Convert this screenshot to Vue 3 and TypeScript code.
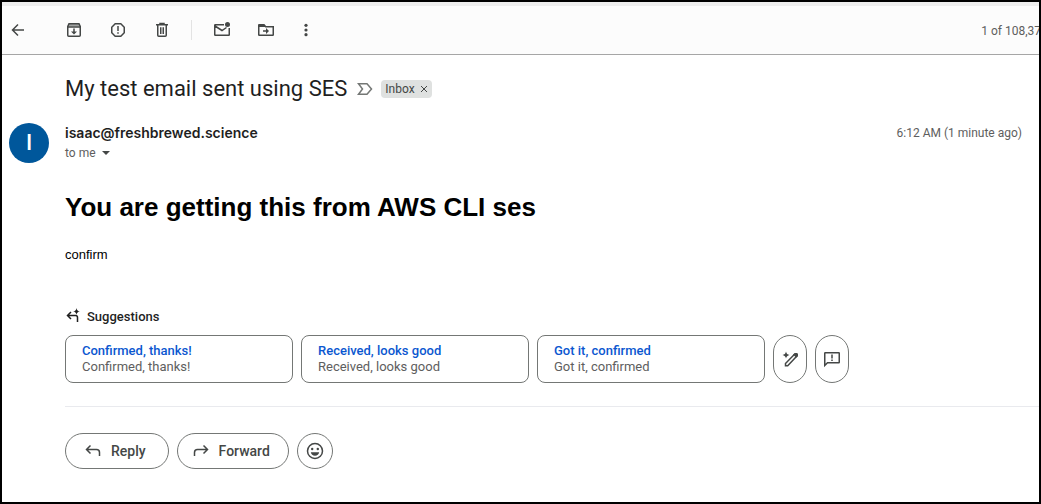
<script setup lang="ts">
interface Suggestion {
  title: string
  body: string
}

const suggestions: Suggestion[] = [
  { title: 'Confirmed, thanks!', body: 'Confirmed, thanks!' },
  { title: 'Received, looks good', body: 'Received, looks good' },
  { title: 'Got it, confirmed', body: 'Got it, confirmed' },
]
</script>

<template>
  <div class="window">
    <header class="toolbar">
      <button class="tool back" aria-label="Back to inbox">
        <svg viewBox="0 0 20 20"><path d="M16 10H5M10 4.5 4.5 10l5.500 5.500" class="line" /></svg>
      </button>
      <button class="tool" aria-label="Archive">
        <svg viewBox="0 0 20 20">
          <path d="M3.750 6.500v8.750a1 1 0 0 0 1 1h10.500a1 1 0 0 0 1-1V6.500L15 3.750H5L3.750 6.500Z" class="line" />
          <path d="M4 7h12" class="line" />
          <path d="M5 4h10l1 2.500H4z" opacity=".5" />
          <path d="M9.250 8.500h1.500v3h2.250l-3 3-3-3h2.250z" />
        </svg>
      </button>
      <button class="tool" aria-label="Report spam">
        <svg viewBox="0 0 20 20">
          <path d="M7.200 3.750h5.600l3.450 3.450v5.600l-3.450 3.450H7.200L3.750 12.800V7.200z" class="line" />
          <path d="M9.250 6h1.500v5h-1.500zM9.250 12.200h1.500v1.600h-1.500z" />
        </svg>
      </button>
      <button class="tool" aria-label="Delete">
        <svg viewBox="0 0 20 20">
          <path d="M4 4.750h12M8 4V3.500h4V4M5.750 5v10.250a1 1 0 0 0 1 1h6.500a1 1 0 0 0 1-1V5M8.750 7.200v6.800M11.250 7.200v6.800" class="line" />
        </svg>
      </button>
      <span class="divider"></span>
      <button class="tool" aria-label="Mark as unread">
        <svg viewBox="0 0 20 20">
          <path d="M12 4.750H3.250a.5.5 0 0 0-.5.5v9.500a.5.5 0 0 0 .5.5h13.500a.5.5 0 0 0 .5-.5V8M3 6l7 4.500L14.500 7.500" class="line" />
          <circle cx="15.500" cy="4.500" r="2.500" />
        </svg>
      </button>
      <button class="tool" aria-label="Move to">
        <svg viewBox="0 0 20 20">
          <path d="M2.750 6.500v8.250a.5.5 0 0 0 .5.500h13.500a.5.5 0 0 0 .5-.500V6.750H9.700L8 4.750H3.250a.5.5 0 0 0-.5.500z" class="line" />
          <path d="M2.500 4.500h5.500l2 2.500H2.500z" />
          <path d="M7 10.250h3V8l3 3-3 3v-2.250H7z" />
        </svg>
      </button>
      <button class="tool more" aria-label="More">
        <svg viewBox="0 0 20 20">
          <circle cx="10" cy="5.300" r="1.600" /><circle cx="10" cy="10" r="1.600" /><circle cx="10" cy="14.700" r="1.600" />
        </svg>
      </button>
      <span class="counter">1 of 108,37</span>
    </header>

    <main class="mail">
      <div class="subject-row">
        <h1>My test email sent using SES</h1>
        <svg class="marker" viewBox="0 0 16 14"><path d="M1.500 1.750h8.500l4.500 5.250-4.500 5.250H1.500L5.500 7z" /></svg>
        <span class="label">Inbox<button aria-label="Remove label Inbox"><svg viewBox="0 0 8 8"><path d="m1 1 6 6M7 1 1 7" /></svg></button></span>
      </div>

      <div class="sender-row">
        <span class="avatar">I</span>
        <div class="sender">
          <div class="address">isaac@freshbrewed.science</div>
          <button class="recipient">to me<svg viewBox="0 0 8 4"><path d="M0 0h8L4 4z" /></svg></button>
        </div>
        <time>6:12 AM (1 minute ago)</time>
      </div>

      <article class="message">
        <h2>You are getting this from AWS CLI ses</h2>
        <p>confirm</p>
      </article>

      <section class="replies">
        <h3>
          <svg viewBox="0 0 16 16">
            <path d="M6 4 2.500 7.500 6 11M2.500 7.500h8a2 2 0 0 1 2 2V14" class="line" />
            <path d="M11.500 0q.4 3.100 3.500 3.500-3.100.4-3.500 3.500-.4-3.100-3.500-3.500 3.100-.4 3.500-3.500z" />
          </svg>Suggestions
        </h3>
        <div class="cards">
          <button v-for="s in suggestions" :key="s.title" class="card">
            <span class="card-title">{{ s.title }}</span>
            <span class="card-body">{{ s.body }}</span>
          </button>
          <button class="pill" aria-label="Help me write">
            <svg viewBox="0 0 20 20">
              <path d="M5.500 16.800v-2.300L14.800 5a1.200 1.200 0 0 1 1.700 0l.4.4a1.200 1.200 0 0 1 0 1.700L7.700 16.800z" class="line" />
              <path d="m13 5.500 2-1.500h2l1 1v2l-1.800 1.800z" />
              <path d="M6 2.500q.5 3 3.500 3.500-3 .5-3.500 3.500Q5.500 6.500 2.500 6q3-.5 3.500-3.500z" />
            </svg>
          </button>
          <button class="pill" aria-label="Send feedback">
            <svg viewBox="0 0 20 20">
              <path d="M2.750 16.500V4.250a.5.5 0 0 1 .5-.5h13.500a.5.5 0 0 1 .5.500v9a.5.5 0 0 1-.5.500H5.500z" class="line" />
              <path d="M9.250 5.500h1.500v4h-1.500zM9.250 10.500h1.500V12h-1.500z" />
            </svg>
          </button>
        </div>
      </section>

      <footer class="actions">
        <button class="action">
          <svg viewBox="0 0 20 20"><path d="M7.500 4.500 3.500 8.500l4 4M3.500 8.500h10a3 3 0 0 1 3 3V15" class="line" /></svg>Reply
        </button>
        <button class="action forward">
          <svg viewBox="0 0 20 20"><path d="m12.500 4.500 4 4-4 4M16.500 8.500h-10a3 3 0 0 0-3 3V15" class="line" /></svg>Forward
        </button>
        <button class="action round" aria-label="Add reaction">
          <svg viewBox="0 0 20 20">
            <circle cx="10" cy="10" r="7.500" class="line" />
            <circle cx="7.200" cy="8" r="1.200" /><circle cx="12.800" cy="8" r="1.200" />
            <path d="M5.800 11.300h8.400a4.300 4.300 0 0 1-8.400 0z" />
          </svg>
        </button>
      </footer>
    </main>
  </div>
</template>

<style>
body {
  margin: 0;
  background: #fff;
}
</style>

<style scoped>
* {
  box-sizing: border-box;
}

.window {
  min-height: 100vh;
  overflow: hidden;
  border: 2px solid #000;
  background: #fff;
  color: #444746;
  font-family: Roboto, "Liberation Sans", sans-serif;
  font-size: 12px;
}

button {
  padding: 0;
  border: 0;
  background: none;
  color: inherit;
  font: inherit;
  cursor: pointer;
}

svg {
  display: block;
  flex: none;
  fill: currentColor;
}

.line {
  fill: none;
  stroke: currentColor;
  stroke-width: 1.5;
}

.toolbar {
  display: flex;
  align-items: center;
  height: 53px;
  padding-left: 6px;
  border-top: 4px solid #eee;
  border-bottom: 1px solid #a6a6a6;
  background: #fcfcfc;
}

.tool {
  width: 20px;
  height: 20px;
  margin-right: 24px;
}

.tool svg {
  width: 20px;
  height: 20px;
}

.back {
  margin-right: 36px;
}

.more {
  margin-left: -4px;
}

.divider {
  width: 1px;
  height: 20px;
  margin: 0 20px 0 -5px;
  background: #e3e3e3;
}

.counter {
  margin: 2px -2px 0 auto;
  color: #5e5e5e;
  white-space: nowrap;
}

.mail {
  padding-left: 63px;
}

.subject-row {
  display: flex;
  align-items: center;
  height: 28px;
  margin-top: 20px;
}

h1 {
  margin: 0;
  color: #1f1f1f;
  font-size: 22px;
  font-weight: 400;
  line-height: 28px;
}

.marker {
  width: 16px;
  height: 14px;
  margin: 0 8px 0 10px;
  fill: none;
  stroke: #747775;
  stroke-width: 1.5;
}

.label {
  display: flex;
  align-items: center;
  height: 18px;
  padding: 0 4px;
  border-radius: 4px;
  background: #dfe1e0;
}

.label svg {
  width: 8px;
  height: 8px;
  margin-left: 5px;
  stroke: currentColor;
  stroke-width: 1;
}

.sender-row {
  display: flex;
  margin: 20px 17px 0 -56px;
}

.avatar {
  flex: none;
  width: 40px;
  height: 40px;
  margin-right: 16px;
  border-radius: 50%;
  background: #00579b;
  color: #fff;
  font-size: 22px;
  font-weight: 500;
  line-height: 40px;
  text-align: center;
}

.sender {
  flex: 1;
}

.address {
  color: #1f1f1f;
  font-family: Inter, Roboto, sans-serif;
  font-size: 14px;
  font-weight: 600;
  line-height: 20px;
}

.recipient {
  display: flex;
  align-items: center;
  height: 20px;
  color: #5e5e5e;
}

.recipient svg {
  width: 8px;
  height: 4px;
  margin-left: 6px;
  fill: #444746;
}

time {
  color: #5e5e5e;
  line-height: 20px;
}

.message {
  margin-top: 28px;
  color: #000;
  font-family: "Liberation Sans", Arial, sans-serif;
}

h2 {
  margin: 0;
  font-size: 26px;
  line-height: 32px;
}

.message p {
  margin: 22px 0 0;
  font-size: 13px;
  line-height: 20px;
}

.replies {
  margin-top: 43px;
}

h3 {
  display: flex;
  align-items: center;
  height: 16px;
  margin: 0 0 11px;
  color: #1f1f1f;
  font-size: 13px;
  font-weight: 500;
}

h3 svg {
  width: 16px;
  height: 16px;
  margin-right: 6px;
}

.cards,
.actions {
  display: flex;
  gap: 8px;
}

.card {
  display: flex;
  flex-direction: column;
  justify-content: center;
  width: 228px;
  height: 48px;
  padding: 0 16px;
  border: 1px solid #747775;
  border-radius: 8px;
  font-size: 13px;
  line-height: 16px;
  text-align: left;
}

.card-title {
  color: #0b57d0;
  font-weight: 500;
}

.card-body {
  color: #5e5e5e;
}

.pill {
  display: flex;
  align-items: center;
  justify-content: center;
  width: 34px;
  height: 48px;
  border: 1px solid #747775;
  border-radius: 17px;
}

.pill svg {
  width: 20px;
  height: 20px;
}

.actions {
  margin-top: 23px;
  padding-top: 26px;
  border-top: 1px solid #e9eaee;
}

.action {
  display: flex;
  align-items: center;
  height: 36px;
  padding: 0 22px 0 17px;
  border: 1px solid #747775;
  border-radius: 18px;
  font-size: 14px;
  font-weight: 500;
}

.forward {
  padding: 0 18px 0 13px;
}

.action svg {
  width: 20px;
  height: 20px;
  margin-right: 8px;
}

.round {
  justify-content: center;
  width: 36px;
  padding: 0;
}

.round svg {
  margin: 0;
}
</style>
